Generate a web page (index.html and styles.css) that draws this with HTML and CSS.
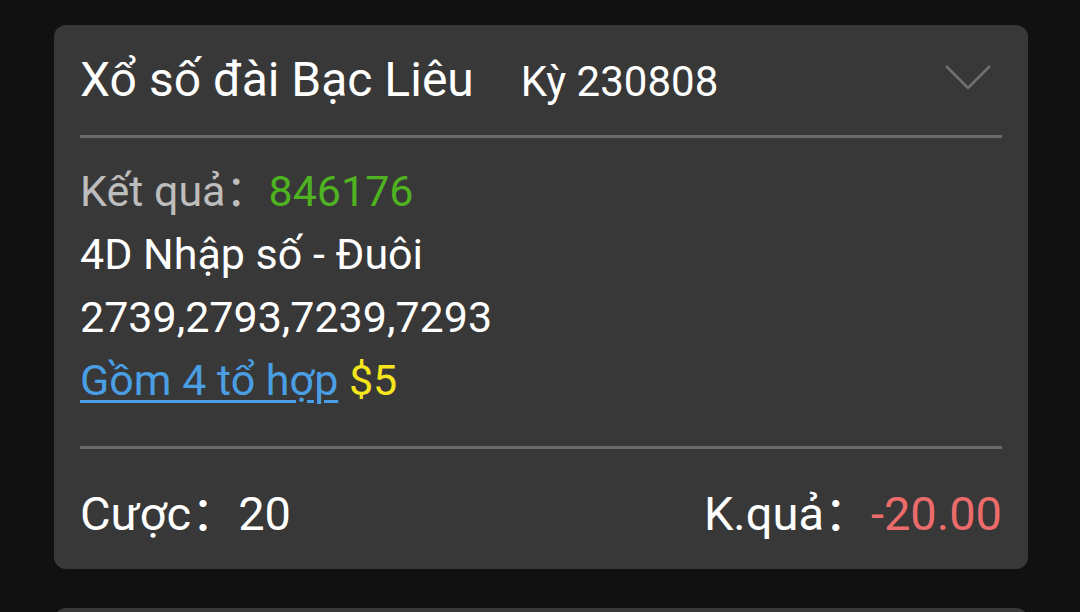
FILE: index.html
```html
<!DOCTYPE html>
<html lang="vi">
<head>
  <meta charset="UTF-8">
  <title>Lịch sử cược</title>
  <link rel="stylesheet" href="styles.css">
</head>
<body>
<div class="list">
  <div class="card">
    <div class="card-head">
      <span class="title">Xổ số đài Bạc Liêu</span>
      <span class="period">Kỳ 230808</span>
      <svg class="arrow" width="50" height="30" viewBox="0 0 50 30">
        <polyline points="2,2 24,24 46,2" fill="none" stroke="#6f6f6f" stroke-width="2.6"/>
      </svg>
    </div>

    <div class="card-body">
      <div class="row"><span class="muted">Kết quả：</span><span class="green">846176</span></div>
      <div class="row">4D Nhập số - Đuôi</div>
      <div class="row">2739,2793,7239,7293</div>
      <div class="row"><a href="#" class="link">Gồm 4 tổ hợp</a> <span class="yellow">$5</span></div>
    </div>

    <div class="card-foot">
      <span>Cược：20</span>
      <span>K.quả：<span class="red">-20.00</span></span>
    </div>
  </div>

  <div class="card next"></div>
</div>
</body>
</html>
```

FILE: styles.css
```css
* {
  box-sizing: border-box;
}

body {
  margin: 0;
  background: #111111;
  font-family: Roboto, "Noto Sans CJK SC", sans-serif;
  color: #ffffff;
  overflow: hidden;
}

.list {
  display: flex;
  flex-direction: column;
  gap: 39px;
  padding: 25px 52px 0 54px;
}

.card {
  background: #383838;
  border-radius: 12px;
  padding: 0 26px;
}

.card.next {
  height: 40px;
}

.card-head {
  display: flex;
  align-items: baseline;
  padding: 25px 0 23px;
  line-height: 60px;
  font-size: 48px;
  border-bottom: 3px solid #6a6a6a;
}

.card-head .period {
  margin-left: 47px;
  font-size: 42px;
}

.card-head .arrow {
  margin-left: auto;
  margin-right: 8px;
  align-self: flex-start;
  margin-top: 14px;
}

.card-body {
  padding: 22px 0 34px;
  font-size: 43px;
  line-height: 63px;
  border-bottom: 3px solid #6a6a6a;
}

.muted {
  color: #bdbdbd;
}

.green {
  color: #4fb220;
}

.link {
  color: #4a9fe4;
  text-decoration: underline;
  text-underline-offset: 5px;
  text-decoration-thickness: 3px;
}

.yellow {
  color: #f7e51b;
}

.red {
  color: #ec6c6c;
}

.card-foot {
  display: flex;
  justify-content: space-between;
  padding: 33px 0 24px;
  font-size: 47px;
  line-height: 63px;
}
```
